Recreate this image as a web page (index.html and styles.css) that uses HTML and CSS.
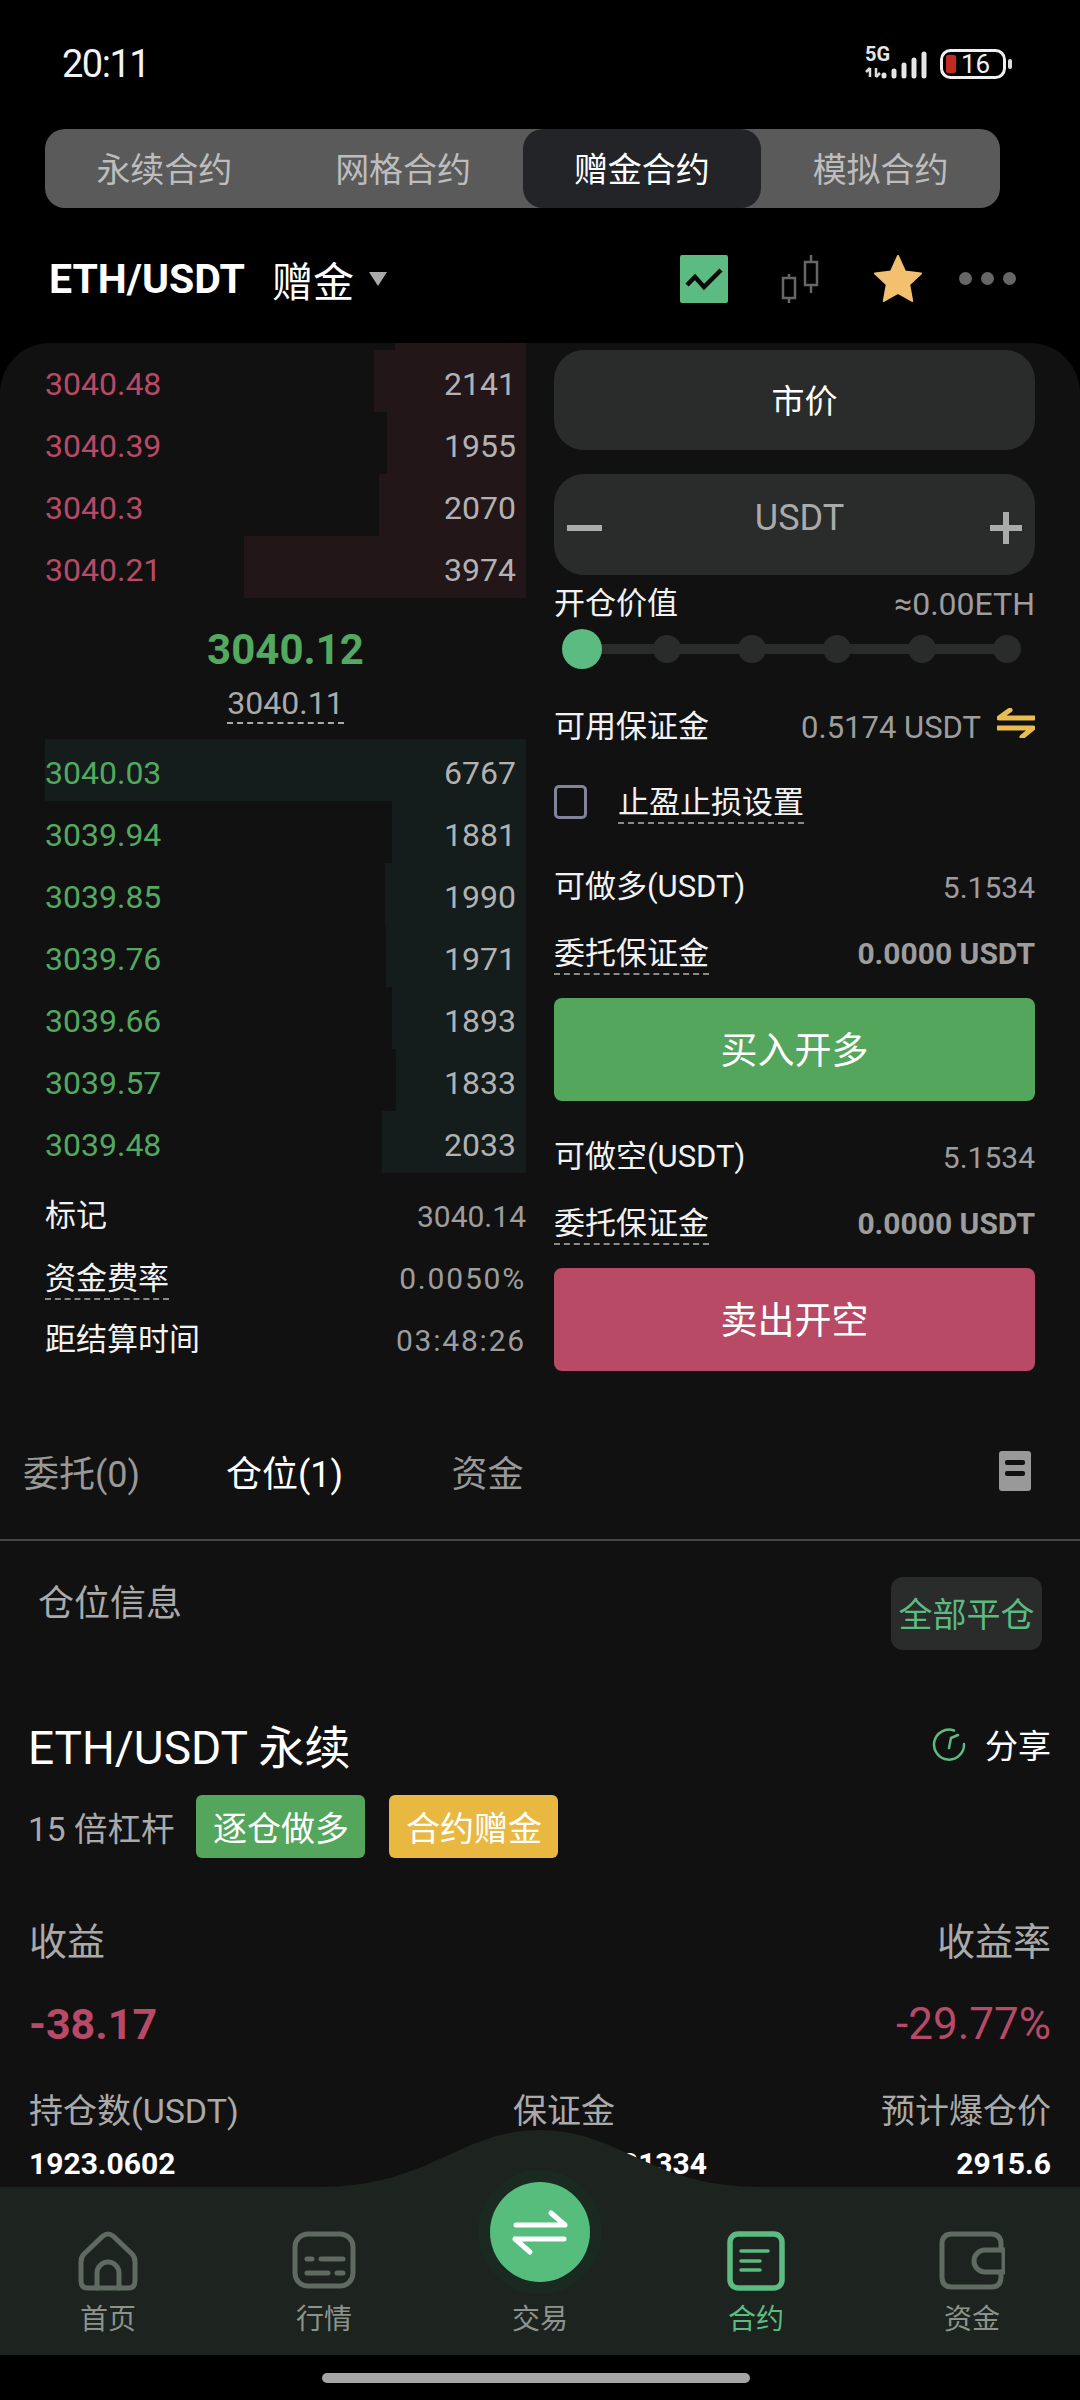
FILE: index.html
```html
<!DOCTYPE html>
<html lang="zh-CN">
<head>
    <meta charset="UTF-8">
    <meta name="viewport" content="width=device-width, initial-scale=1.0">
    <title>ETH/USDT 赠金合约</title>
    <link rel="stylesheet" href="styles.css">
</head>
<body>
    <div class="status-bar">
        <span class="time">20:11</span>
        <svg class="status-icons" viewBox="0 -6 150 42" width="150" height="42">
            <text x="3" y="12" class="net-text">5G</text>
            <path d="M8 19v9M4 23l4-4 M14 19v9M14 28l4-4" class="net-arrows"/>
            <path d="M22 26v1M32 22v5M42 16v11M52 11v16M62 5v22" class="net-bars"/>
            <rect x="79.500" y="1.500" width="63" height="27" rx="9" class="batt-shell"/>
            <rect x="84" y="6" width="10" height="18" rx="2" class="batt-level"/>
            <text x="99" y="24" class="batt-text">16</text>
            <rect x="146" y="10" width="4" height="10" rx="2" class="batt-nib"/>
        </svg>
    </div>

    <div class="segment">
        <div class="segment-item">永续合约</div>
        <div class="segment-item">网格合约</div>
        <div class="segment-item active">赠金合约</div>
        <div class="segment-item">模拟合约</div>
    </div>

    <div class="symbol-bar">
        <span class="symbol-name">ETH/USDT</span>
        <span class="symbol-type">赠金</span>
        <i class="caret"></i>
        <div class="symbol-tools">
            <svg class="tool-chart" viewBox="0 0 48 48" width="48" height="48">
                <rect width="48" height="48" rx="2" fill="#5bbb80"/>
                <path d="M7 30l8-8 9 10 17-17" fill="none" stroke="#0a0a0a" stroke-width="4.500"/>
            </svg>
            <svg class="tool-candle" viewBox="0 0 38 48" width="38" height="48">
                <path d="M8 19v29M30 0v38" stroke="#666" stroke-width="2.500"/>
                <rect x="2" y="23" width="12" height="20" fill="#000" stroke="#666" stroke-width="2.500"/>
                <rect x="24" y="7" width="12" height="23" fill="#000" stroke="#666" stroke-width="2.500"/>
            </svg>
            <svg class="tool-star" viewBox="0 0 48 48" width="48" height="48">
                <path d="M24 1l7 15.500 16 2-11.800 11 3 16.500-14.200-8-14.200 8 3-16.500-11.800-11 16-2z" fill="#f2c06e" stroke="#f2c06e" stroke-width="2" stroke-linejoin="round"/>
            </svg>
            <div class="tool-more"><i></i><i></i><i></i></div>
        </div>
    </div>

    <main class="panel">
        <section class="trade">
            <div class="book">
                <div class="book-peek"><i class="depth ask" style="width:131px"></i></div>
                <div class="book-row"><i class="depth ask" style="width:152px"></i><span class="price down">3040.48</span><span class="qty">2141</span></div>
                <div class="book-row"><i class="depth ask" style="width:139px"></i><span class="price down">3040.39</span><span class="qty">1955</span></div>
                <div class="book-row"><i class="depth ask" style="width:147px"></i><span class="price down">3040.3</span><span class="qty">2070</span></div>
                <div class="book-row"><i class="depth ask" style="width:282px"></i><span class="price down">3040.21</span><span class="qty">3974</span></div>

                <div class="mid">
                    <div class="mid-last">3040.12</div>
                    <div class="mid-mark"><span>3040.11</span></div>
                </div>

                <div class="book-row"><i class="depth bid" style="width:481px"></i><span class="price up">3040.03</span><span class="qty">6767</span></div>
                <div class="book-row"><i class="depth bid" style="width:134px"></i><span class="price up">3039.94</span><span class="qty">1881</span></div>
                <div class="book-row"><i class="depth bid" style="width:141px"></i><span class="price up">3039.85</span><span class="qty">1990</span></div>
                <div class="book-row"><i class="depth bid" style="width:140px"></i><span class="price up">3039.76</span><span class="qty">1971</span></div>
                <div class="book-row"><i class="depth bid" style="width:134px"></i><span class="price up">3039.66</span><span class="qty">1893</span></div>
                <div class="book-row"><i class="depth bid" style="width:130px"></i><span class="price up">3039.57</span><span class="qty">1833</span></div>
                <div class="book-row"><i class="depth bid" style="width:144px"></i><span class="price up">3039.48</span><span class="qty">2033</span></div>

                <div class="market-info">
                    <div class="info-row"><span class="label">标记</span><span class="value">3040.14</span></div>
                    <div class="info-row"><span class="label dashed">资金费率</span><span class="value wide">0.0050%</span></div>
                    <div class="info-row"><span class="label">距结算时间</span><span class="value wide">03:48:26</span></div>
                </div>
            </div>

            <div class="order">
                <div class="field field-market">市价</div>
                <div class="field stepper">
                    <i class="step-minus"></i>
                    <span class="stepper-unit">USDT</span>
                    <i class="step-plus"></i>
                </div>

                <div class="info-row open-row"><span class="label">开仓价值</span><span class="value open-value">≈0.00ETH</span></div>
                <div class="slider">
                    <i class="slider-thumb"></i><i></i><i></i><i></i><i></i><i></i>
                </div>

                <div class="info-row avail-row">
                    <span class="label">可用保证金</span>
                    <span class="avail-value">
                        <span class="value">0.5174 USDT</span>
                        <svg viewBox="0 0 38 30" width="38" height="30">
                            <path d="M37 10H2L13 2M1 20H36L25 29" fill="none" stroke="#e9bd4f" stroke-width="5" stroke-linecap="round" stroke-linejoin="round"/>
                        </svg>
                    </span>
                </div>

                <div class="info-row check-row">
                    <i class="checkbox"></i>
                    <span class="label dashed">止盈止损设置</span>
                </div>

                <div class="info-row long-row"><span class="label">可做多(USDT)</span><span class="value">5.1534</span></div>
                <div class="info-row margin-row"><span class="label dashed">委托保证金</span><span class="value strong">0.0000 USDT</span></div>
                <div class="action buy">买入开多</div>

                <div class="info-row long-row"><span class="label">可做空(USDT)</span><span class="value">5.1534</span></div>
                <div class="info-row margin-row"><span class="label dashed">委托保证金</span><span class="value strong">0.0000 USDT</span></div>
                <div class="action sell">卖出开空</div>
            </div>
        </section>

        <nav class="tabs">
            <span class="tab">委托(0)</span>
            <span class="tab active">仓位(1)</span>
            <span class="tab">资金</span>
            <svg class="tabs-icon" viewBox="0 0 32 40" width="32" height="40">
                <rect width="32" height="40" rx="3" fill="#999"/>
                <rect x="6" y="9" width="20" height="5" rx="2" fill="#111112"/>
                <rect x="6" y="20" width="20" height="5" rx="2" fill="#111112"/>
            </svg>
        </nav>

        <section class="position">
            <div class="position-head">
                <span class="position-title">仓位信息</span>
                <span class="close-all">全部平仓</span>
            </div>

            <div class="contract-row">
                <span class="contract-name">ETH/USDT 永续</span>
                <span class="share">
                    <svg viewBox="0 0 34 34" width="34" height="34">
                        <path d="M22 3.500A15 15 0 1 0 32 17M17 21L19 11L26 8" fill="none" stroke="#5bbb80" stroke-width="2.500" stroke-linecap="round"/>
                    </svg>
                    分享
                </span>
            </div>

            <div class="leverage-row">
                <span class="leverage">15 倍杠杆</span>
                <span class="badge badge-green">逐仓做多</span>
                <span class="badge badge-yellow">合约赠金</span>
            </div>

            <div class="pnl-head"><span>收益</span><span>收益率</span></div>
            <div class="pnl-values"><span class="pnl-amount">-38.17</span><span class="pnl-rate">-29.77%</span></div>

            <div class="stats">
                <span class="stat-label">持仓数(USDT)</span>
                <span class="stat-label">保证金</span>
                <span class="stat-label right">预计爆仓价</span>
                <span class="stat-value">1923.0602</span>
                <span class="stat-value right">128.21334</span>
                <span class="stat-value right">2915.6</span>
            </div>
        </section>

        <footer class="bottom-nav">
            <svg class="nav-bg" viewBox="0 0 1080 225" width="1080" height="225">
                <path d="M0 57H320C430 57 460 0 540 0C620 0 650 57 760 57H1080V225H0Z" fill="#1d231e"/>
            </svg>
            <div class="nav-item">
                <svg viewBox="0 0 60 60" width="60" height="60">
                    <path d="M6 23L25 5Q30 1 35 5L54 23Q57 26 57 31V50Q57 57 50 57H10Q3 57 3 50V31Q3 26 6 23Z" class="nav-line"/>
                    <path d="M19 57V42A11 11 0 0 1 41 42V57" class="nav-line"/>
                </svg>
                <span>首页</span>
            </div>
            <div class="nav-item">
                <svg viewBox="0 0 64 60" width="64" height="60">
                    <rect x="3" y="3" width="58" height="52" rx="13" class="nav-line"/>
                    <path d="M15 28h5M29 28h22M15 42h21M45 42h6" class="nav-line"/>
                </svg>
                <span>行情</span>
            </div>
            <div class="nav-item">
                <div class="trade-halo">
                    <div class="trade-btn">
                        <svg viewBox="0 0 60 50" width="60" height="50">
                            <path d="M6 18H55L41 6M5 32H54M5 32L20 45" fill="none" stroke="#fff" stroke-width="5" stroke-linecap="round" stroke-linejoin="round"/>
                        </svg>
                    </div>
                </div>
                <span>交易</span>
            </div>
            <div class="nav-item active">
                <svg viewBox="0 0 58 60" width="58" height="60">
                    <rect x="3" y="3" width="52" height="54" rx="8" class="nav-line"/>
                    <path d="M14 20h27M14 30h19M14 39h19" class="nav-line thin"/>
                </svg>
                <span>合约</span>
            </div>
            <div class="nav-item">
                <svg viewBox="0 0 66 60" width="66" height="60">
                    <path d="M62 19V13Q62 3 52 3H13Q3 3 3 13V46Q3 56 13 56H52Q62 56 62 46V41" class="nav-line"/>
                    <path d="M65 19H46A11 11 0 0 0 46 41H65Z" class="nav-line"/>
                </svg>
                <span>资金</span>
            </div>
        </footer>
    </main>

    <div class="home-zone"><i class="home-indicator"></i></div>
</body>
</html>
```

FILE: styles.css
```css
/* page */
html, body {
    margin: 0;
    height: 2400px;
    overflow: hidden;
}

body {
    width: 1080px;
    background: #000;
    color: #fff;
    font-family: Roboto, "Noto Sans CJK SC", sans-serif;
    display: flex;
    flex-direction: column;
}

i {
    display: block;
    font-style: normal;
}

/* status bar */
.status-bar {
    height: 129px;
    flex: none;
    box-sizing: border-box;
    padding: 0 68px 2px 62px;
    display: flex;
    justify-content: space-between;
    align-items: center;
}

.time {
    font-size: 38px;
    letter-spacing: -1.5px;
    color: #f2f2f2;
}

.net-text {
    font: bold 20px Roboto, sans-serif;
    fill: #e6e6e6;
}

.net-arrows {
    fill: none;
    stroke: #ddd;
    stroke-width: 2.5;
}

.net-bars {
    fill: none;
    stroke: #e6e6e6;
    stroke-width: 5;
    stroke-linecap: round;
}

.batt-shell {
    fill: none;
    stroke: #f0f0f0;
    stroke-width: 3;
}

.batt-level {
    fill: #c22a22;
}

.batt-text {
    font: 26px Roboto, sans-serif;
    fill: #f0f0f0;
}

.batt-nib {
    fill: #ddd;
}

/* contract type switch */
.segment {
    flex: none;
    width: 955px;
    height: 79px;
    margin-left: 45px;
    background: #5a5a5a;
    border-radius: 20px;
    display: grid;
    grid-template-columns: repeat(4, 1fr);
}

.segment-item {
    display: flex;
    align-items: center;
    justify-content: center;
    box-sizing: border-box;
    padding-bottom: 3px;
    font-size: 34px;
    color: #bdbdbd;
    border-radius: 20px;
}

.segment-item.active {
    background: #232427;
    color: #fff;
}

/* symbol header */
.symbol-bar {
    flex: none;
    height: 135px;
    box-sizing: border-box;
    padding: 6px 64px 0 49px;
    display: flex;
    align-items: center;
}

.symbol-name {
    font-size: 41px;
    font-weight: 700;
}

.symbol-type {
    font-size: 41px;
    margin-left: 27px;
}

.caret {
    width: 0;
    height: 0;
    margin-left: 15px;
    border-left: 9px solid transparent;
    border-right: 9px solid transparent;
    border-top: 14px solid #aaa;
}

.symbol-tools {
    margin-left: auto;
    display: flex;
    align-items: center;
}

.tool-candle {
    margin-left: 53px;
}

.tool-star {
    margin-left: 55px;
}

.tool-more {
    margin-left: 37px;
    display: flex;
    gap: 9px;
}

.tool-more i {
    width: 13px;
    height: 13px;
    border-radius: 50%;
    background: #666;
}

/* main rounded panel */
.panel {
    flex: none;
    height: 2012px;
    position: relative;
    overflow: hidden;
    background: #111112;
    border-radius: 50px 50px 0 0;
}

.trade {
    display: grid;
    grid-template-columns: 481px 481px;
    column-gap: 28px;
    padding: 0 45px;
}

/* order book */
.book-peek {
    height: 7px;
    position: relative;
}

.book-row {
    height: 62px;
    box-sizing: border-box;
    position: relative;
    display: flex;
    justify-content: space-between;
    align-items: center;
    padding: 6px 10px 0 0;
    font-size: 32px;
}

.book-row span {
    position: relative;
}

.depth {
    position: absolute;
    top: 0;
    right: 0;
    bottom: 0;
}

.depth.ask {
    background: #231619;
}

.depth.bid {
    background: #141c1c;
}

.price.down {
    color: #b84a68;
}

.price.up {
    color: #52a95f;
}

.qty {
    color: #b2b2b2;
}

.mid {
    height: 141px;
    box-sizing: border-box;
    padding-top: 25px;
    text-align: center;
}

.mid-last {
    font-size: 42px;
    font-weight: 700;
    line-height: 54px;
    color: #52a95f;
}

.mid-mark {
    margin-top: 7px;
    font-size: 32px;
    line-height: 38px;
    color: #aaa;
}

.mid-mark span {
    display: inline-block;
    border-bottom: 2px dashed #aaa;
}

.market-info {
    padding-top: 12px;
}

.info-row {
    height: 58px;
    display: flex;
    justify-content: space-between;
    align-items: center;
}

.market-info .info-row {
    height: 62px;
}

.label {
    font-size: 31px;
    line-height: 38px;
    margin-top: 3px;
    padding-bottom: 3px;
    color: #f2f2f2;
}

.label.dashed {
    padding-bottom: 0;
    border-bottom: 2px dashed #8a8a8a;
}

.value {
    font-size: 30px;
    color: #9d9d9d;
}

.value.wide {
    letter-spacing: 1.8px;
}

.value.strong {
    font-weight: 700;
}

/* order form */
.order {
    padding-top: 7px;
}

.field {
    height: 100px;
    margin-bottom: 24px;
    border-radius: 30px;
    background: #2a2b2b;
    display: flex;
    align-items: center;
    justify-content: center;
    font-size: 33px;
}

.field-market {
    box-sizing: border-box;
    padding: 0 0 3px 20px;
}

.stepper {
    margin-bottom: 0;
    height: 101px;
    justify-content: space-between;
    padding: 0 13px;
}

.stepper-unit {
    font-size: 36px;
    color: #aaa;
    margin: 0 0 14px 7px;
}

.step-minus {
    width: 35px;
    height: 6px;
    background: #aaa;
    margin-top: 6px;
}

.step-plus {
    width: 32px;
    height: 32px;
    margin-top: 6px;
    background:
        linear-gradient(#aaa, #aaa) center / 32px 6px no-repeat,
        linear-gradient(#aaa, #aaa) center / 6px 32px no-repeat;
}

.open-row {
    height: 50px;
    margin-top: 4px;
}

.open-value {
    font-size: 32px;
}

.slider {
    height: 39px;
    box-sizing: border-box;
    padding: 0 14px;
    display: flex;
    justify-content: space-between;
    align-items: center;
    background: linear-gradient(#2a2b2b, #2a2b2b) center / 425px 10px no-repeat;
}

.slider i {
    flex: none;
    width: 28px;
    height: 28px;
    border-radius: 50%;
    background: #2a2b2b;
}

.slider .slider-thumb {
    width: 40px;
    height: 40px;
    margin: 0 -6px;
    background: #5bbb80;
}

.avail-row {
    margin-top: 30px;
}

.avail-value {
    display: flex;
    align-items: center;
    gap: 16px;
}

.avail-value .value {
    font-size: 31px;
}

.avail-value svg {
    margin-bottom: 8px;
}

.check-row {
    margin-top: 17px;
    justify-content: flex-start;
    gap: 31px;
}

.checkbox {
    width: 27px;
    height: 28px;
    border: 3px solid #808399;
    border-radius: 5px;
}

.long-row {
    margin-top: 27px;
}

.margin-row {
    margin-top: 8px;
}

.action {
    height: 103px;
    margin-top: 16px;
    box-sizing: border-box;
    padding-bottom: 3px;
    border-radius: 8px;
    display: flex;
    align-items: center;
    justify-content: center;
    font-size: 37px;
}

.buy {
    background: #53a65c;
}

.sell {
    background: #b94a66;
}

/* record tabs */
.tabs {
    height: 120px;
    margin-top: 50px;
    box-sizing: border-box;
    padding: 0 49px 18px 0;
    border-bottom: 2px solid #444;
    display: flex;
    align-items: center;
}

.tab {
    flex: none;
    width: 203px;
    text-align: center;
    font-size: 36px;
    color: #999;
}

.tab:first-child {
    margin-left: -20px;
}

.tab.active {
    color: #fff;
}

.tabs-icon {
    margin-left: auto;
}

/* position card */
.position {
    padding: 0 29px;
}

.position-head {
    margin-top: 36px;
    padding: 0 9px;
    display: flex;
    justify-content: space-between;
    align-items: flex-start;
}

.position-title {
    font-size: 36px;
    line-height: 48px;
    padding-top: 3px;
    color: #aaa;
}

.close-all {
    width: 151px;
    height: 73px;
    box-sizing: border-box;
    padding-bottom: 3px;
    border-radius: 12px;
    background: #2a2b2b;
    color: #5bbb80;
    font-size: 34px;
    display: flex;
    align-items: center;
    justify-content: center;
}

.contract-row {
    margin-top: 64px;
    height: 60px;
    display: flex;
    justify-content: space-between;
    align-items: center;
}

.contract-name {
    font-size: 46px;
    margin-left: -1px;
}

.share {
    display: flex;
    align-items: center;
    gap: 19px;
    font-size: 33px;
}

.leverage-row {
    margin-top: 21px;
    display: flex;
    align-items: center;
}

.leverage {
    font-size: 33.5px;
    color: #aaa;
    margin: 0 22px 0 -1px;
}

.badge {
    width: 169px;
    height: 63px;
    margin-right: 24px;
    border-radius: 6px;
    font-size: 34px;
    display: flex;
    align-items: center;
    justify-content: center;
}

.badge-green {
    background: #53a65c;
}

.badge-yellow {
    background: #e9b840;
}

.pnl-head {
    margin-top: 58px;
    display: flex;
    justify-content: space-between;
    font-size: 38px;
    line-height: 52px;
    color: #aaa;
}

.pnl-values {
    margin-top: 26px;
    height: 60px;
    display: flex;
    justify-content: space-between;
    align-items: center;
    color: #b84a68;
}

.pnl-amount {
    font-size: 43px;
    font-weight: 700;
}

.pnl-rate {
    font-size: 44px;
}

.stats {
    margin-top: 34px;
    display: grid;
    grid-template-columns: 484px 194px 1fr;
    row-gap: 10px;
}

.stat-label {
    font-size: 34px;
    line-height: 46px;
    color: #aaa;
}

.stat-value {
    font-size: 30px;
    font-weight: 700;
    line-height: 40px;
}

.right {
    text-align: right;
}

/* bottom navigation, lies over the end of the card */
.bottom-nav {
    position: absolute;
    left: 0;
    right: 0;
    bottom: 0;
    height: 225px;
    box-sizing: border-box;
    padding-bottom: 15px;
    display: grid;
    grid-template-columns: repeat(5, 1fr);
    align-items: end;
}

.nav-bg {
    position: absolute;
    left: 0;
    top: 0;
}

.nav-item {
    position: relative;
    display: flex;
    flex-direction: column;
    align-items: center;
    font-size: 28px;
    line-height: 40px;
    color: #8c938c;
}

.nav-item svg {
    margin-bottom: 9px;
}

.nav-item.active {
    color: #5bbb80;
}

.nav-line {
    fill: none;
    stroke: #5f6a60;
    stroke-width: 5;
    stroke-linecap: round;
}

.nav-item.active .nav-line {
    stroke: #5bbb80;
    stroke-width: 5.5;
}

.nav-item.active .nav-line.thin {
    stroke-width: 3.5;
}

.trade-halo {
    width: 124px;
    height: 124px;
    margin-bottom: 6px;
    border-radius: 50%;
    background: #1a2a20;
    display: flex;
    align-items: center;
    justify-content: center;
}

.trade-btn {
    width: 100px;
    height: 100px;
    border-radius: 50%;
    background: #57bd7d;
    display: flex;
    align-items: center;
    justify-content: center;
}

.trade-btn svg {
    margin-bottom: 0;
}

/* gesture bar */
.home-zone {
    flex: none;
    height: 45px;
    display: flex;
    justify-content: center;
    padding: 18px 8px 0 0;
    box-sizing: border-box;
}

.home-indicator {
    width: 428px;
    height: 10px;
    border-radius: 5px;
    background: #a5a5a5;
}
```
